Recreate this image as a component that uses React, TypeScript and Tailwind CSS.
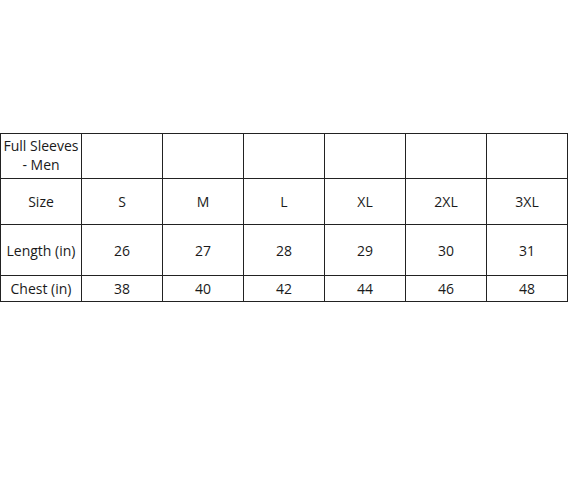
export default function App() {
  const sizes = ["S", "M", "L", "XL", "2XL", "3XL"];
  const length = ["26", "27", "28", "29", "30", "31"];
  const chest = ["38", "40", "42", "44", "46", "48"];
  const cell = "border border-[#222] p-0 text-center align-middle w-[81px]";
  return (
    <div className="w-[568px] h-[494px] bg-white pt-[133px]" style={{ fontFamily: '"Open Sans", sans-serif' }}>
      <table className="border-collapse table-fixed w-[567px] text-[14px] leading-[19px] text-[#1a1a1a]">
        <tbody>
          <tr className="h-[45px]">
            <td className={cell + " pb-[2px]"}>Full Sleeves<br />- Men</td>
            {sizes.map((s) => (
              <td key={s} className={cell}></td>
            ))}
          </tr>
          <tr className="h-[46px]">
            <td className={cell}>Size</td>
            {sizes.map((s) => (
              <td key={s} className={cell}>{s}</td>
            ))}
          </tr>
          <tr className="h-[51px]">
            <td className={cell}>Length (in)</td>
            {length.map((s, i) => (
              <td key={i} className={cell}>{s}</td>
            ))}
          </tr>
          <tr className="h-[26px]">
            <td className={cell}>Chest (in)</td>
            {chest.map((s, i) => (
              <td key={i} className={cell}>{s}</td>
            ))}
          </tr>
        </tbody>
      </table>
    </div>
  );
}
